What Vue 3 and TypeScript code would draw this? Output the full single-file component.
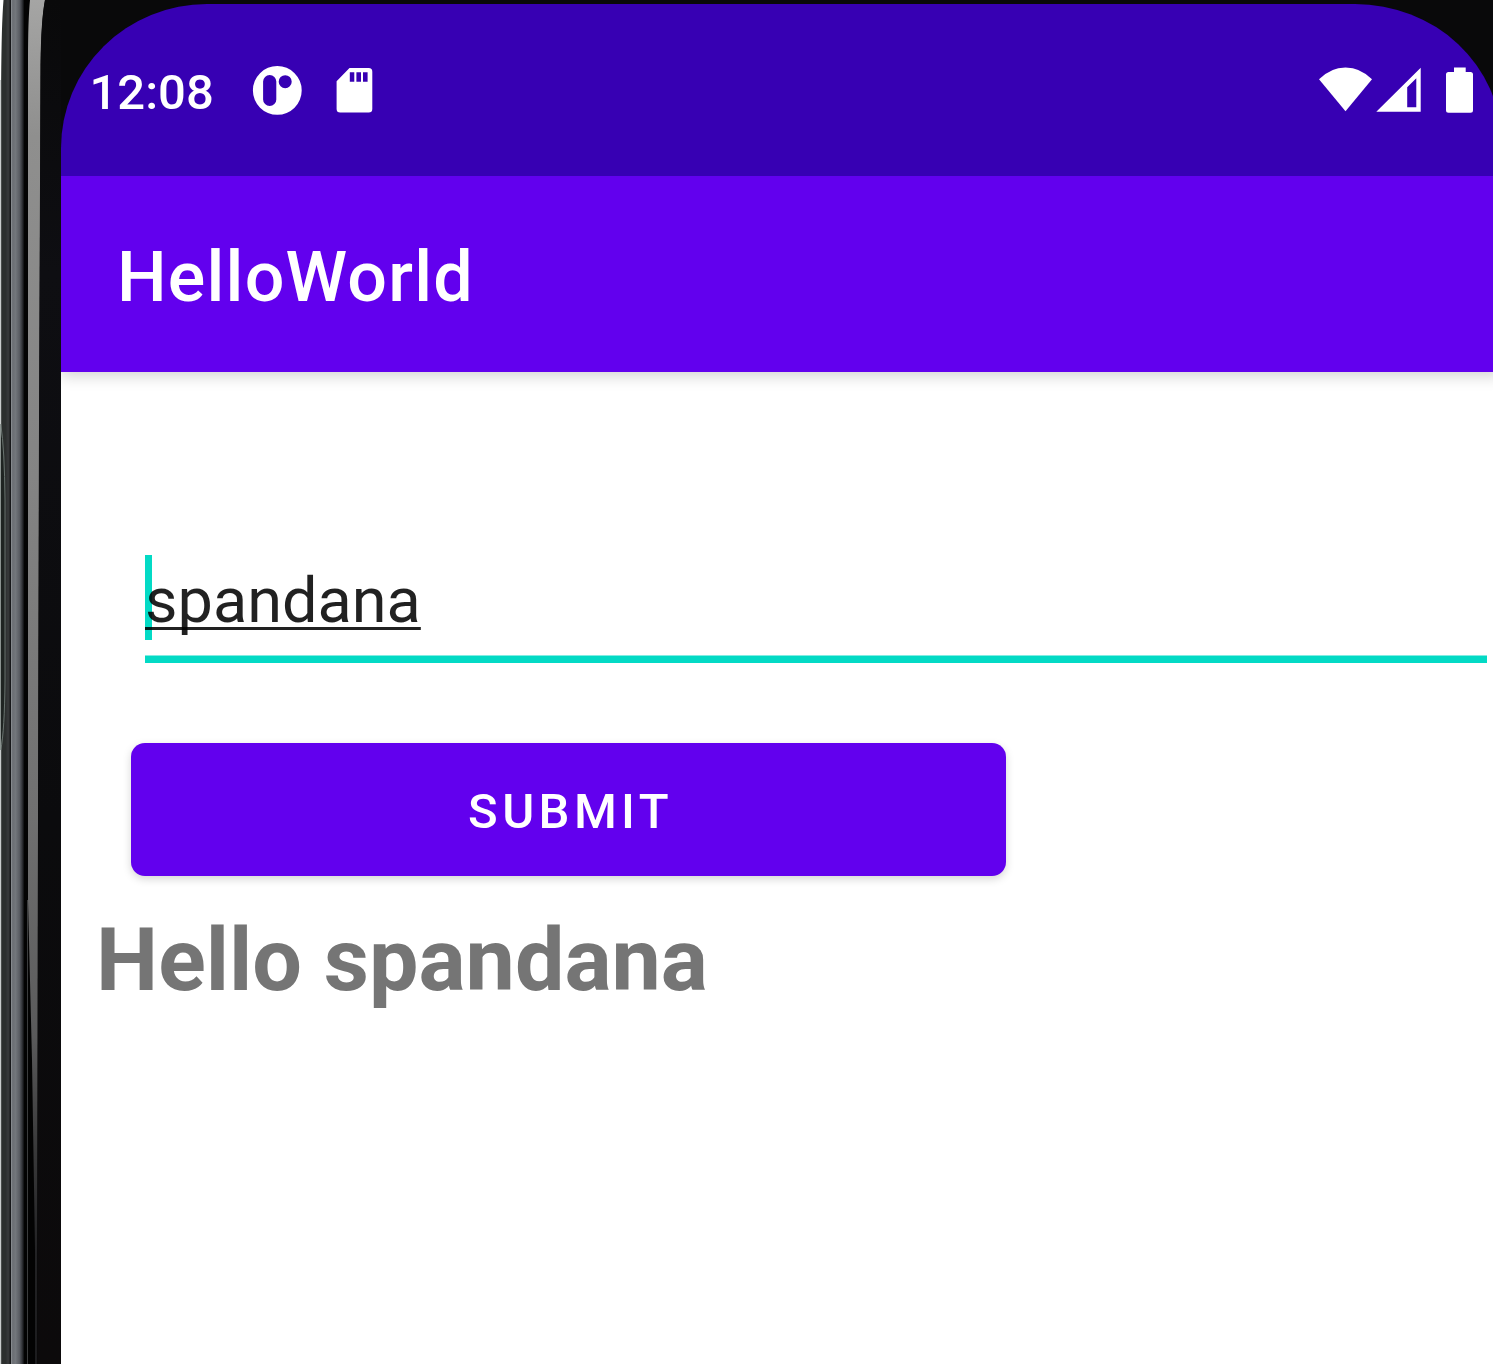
<script setup lang="ts">
import { ref } from 'vue'

const clock = ref('12:08')
const appTitle = ref('HelloWorld')
const name = ref('spandana')
</script>

<template>
  <div class="device">
    <svg class="bezel" width="61" height="1364" viewBox="0 0 61 1364">
      <defs>
        <linearGradient id="rail" x1="0" x2="1" y1="0" y2="0">
          <stop offset="0" stop-color="#66696e" />
          <stop offset="0.35" stop-color="#73777c" />
          <stop offset="0.65" stop-color="#5a5d63" />
          <stop offset="0.85" stop-color="#33353a" />
          <stop offset="1" stop-color="#0c0d0e" />
        </linearGradient>
        <linearGradient id="strip" x1="0" x2="0" y1="0" y2="1">
          <stop offset="0" stop-color="#a5a5a4" />
          <stop offset="0.1" stop-color="#8f8f8e" />
          <stop offset="0.35" stop-color="#848484" />
          <stop offset="0.6" stop-color="#707070" />
          <stop offset="0.76" stop-color="#5a5a5b" />
          <stop offset="0.84" stop-color="#3a3a3b" />
          <stop offset="0.92" stop-color="#222224" />
          <stop offset="1" stop-color="#1c1c1e" />
        </linearGradient>
        <linearGradient id="glass" x1="0" x2="0" y1="0" y2="1">
          <stop offset="0" stop-color="#09090a" />
          <stop offset="0.2" stop-color="#0e0e12" />
          <stop offset="0.6" stop-color="#0b0b0d" />
          <stop offset="1" stop-color="#0c0a0b" />
        </linearGradient>
      </defs>
      <rect width="61" height="1364" fill="#030303" />
      <rect x="1" width="9" height="1364" fill="#2c2f2e" />
      <rect x="6.500" width="3" height="1364" fill="#353738" />
      <rect x="9.700" width="1.500" height="1364" fill="#17181a" />
      <rect x="11" width="13" height="1364" fill="url(#rail)" />
      <rect x="11" width="1.200" height="1364" fill="#85898d" />
      <rect x="39" width="22" height="1364" fill="url(#glass)" />
      <path d="M30 0H45Q41 20 40.500 65L39 420L37.800 900L37.200 1250V1364H35V1250L32 1060L28 900V60Q28 20 30 0Z" fill="url(#strip)" />
      <path d="M45 0H61V1364H37.500L38 900L39.200 420L40.700 65Q41.200 20 45 0Z" fill="url(#glass)" />
      <path d="M27.500 900V1364" stroke="#4a4b4d" stroke-width="0.800" />
      <rect width="1.200" height="1364" fill="#c9cccc" />
      <path d="M0 0H3.500Q1.500 25 1 80H0Z" fill="#fff" />
      <path d="M0 424Q4.500 450 5 500V680Q4.500 730 0 750Z" fill="#1f2422" />
      <path d="M0.800 424Q4.600 450 5 500V680Q4.600 730 0.800 750" fill="none" stroke="#6f7a76" stroke-width="0.900" />
      <path d="M0.500 424V750" stroke="#8b9390" stroke-width="1" />
    </svg>

    <div class="panel">
      <main class="screen">
        <header class="status">
          <span class="clock">{{ clock }}</span>
          <svg class="app-icon" width="50" height="50" viewBox="252 65 50 50">
            <path
              fill="#fff"
              fill-rule="evenodd"
              d="M277.300 66a24.400 24.400 0 1 0 0 48.800a24.400 24.400 0 1 0 0-48.800ZM269.700 75a6.600 6.600 0 0 1 6.600 6.600V99.400a6.600 6.600 0 0 1-13.200 0V81.600a6.600 6.600 0 0 1 6.600-6.600ZM285.200 75.200a6.500 6.500 0 1 1 0 13a6.500 6.500 0 1 1 0-13Z"
            />
          </svg>
          <svg class="sd-icon" width="38" height="46" viewBox="335 67 38 46">
            <path
              fill="#fff"
              fill-rule="evenodd"
              d="M349.500 68.100H368.700Q372.300 68.100 372.300 71.700V109Q372.300 112.600 368.700 112.600H340.200Q336.600 112.600 336.600 109V81.200ZM349.800 72.300V81.800H354.300V72.300ZM356.400 72.300V81.800H361V72.300ZM363 72.300V81.800H367.600V72.300Z"
            />
          </svg>
          <svg class="signals" width="156" height="48" viewBox="1318 66 156 48">
            <g fill="#fff">
              <path d="M1345.500 111.300L1319 79.300Q1330.500 67.400 1345.500 67.400T1372 79.300Z" />
              <path fill-rule="evenodd" d="M1376.300 111.700L1420.700 67.700V111.700ZM1407.200 87.300V107.200H1416.300V78.300Z" />
              <path d="M1454 67.400H1465.700V72H1470.500Q1473 72 1473 74.500V110.200Q1473 112.700 1470.500 112.700H1448.500Q1446 112.700 1446 110.200V74.500Q1446 72 1448.500 72H1454Z" />
            </g>
          </svg>
        </header>
        <div class="appbar">
          <h1>{{ appTitle }}</h1>
        </div>
        <section class="content">
          <div class="field">
            <span class="caret"></span>
            <span class="value">{{ name }}</span>
          </div>
          <button class="submit" type="button">SUBMIT</button>
          <p class="greeting">Hello {{ name }}</p>
        </section>
      </main>
    </div>
  </div>
</template>

<style>
body {
  margin: 0;
  overflow: hidden;
}
</style>

<style scoped>
.device {
  display: flex;
  width: 1493px;
  height: 1364px;
  overflow: hidden;
  background: #09090a;
  font-family: Roboto, 'Liberation Sans', sans-serif;
}
.bezel {
  display: block;
  flex: none;
}
.panel {
  flex: none;
  width: 1440px;
  padding-top: 4px;
  box-sizing: border-box;
  height: 1364px;
  background: #09090a;
}
.screen {
  display: flex;
  flex-direction: column;
  height: 1360px;
}
.status {
  flex: none;
  display: flex;
  align-items: flex-start;
  box-sizing: border-box;
  height: 172px;
  padding: 61px 27px 0 28.500px;
  border-radius: 146px 146px 0 0 / 144px 137px 0 0;
  background: #3700b3;
}
.clock {
  width: 162.500px;
  color: #fff;
  font-size: 49px;
  font-weight: 500;
  line-height: 55px;
}
.app-icon {
  flex: none;
}
.sd-icon {
  flex: none;
  margin: 2px 0 0 33px;
}
.signals {
  flex: none;
  margin: 1px 0 0 auto;
}
.appbar {
  flex: none;
  display: flex;
  align-items: center;
  position: relative;
  height: 196px;
  padding-left: 56px;
  box-sizing: border-box;
  background: #6200ee;
  box-shadow: 0 4px 14px rgba(0, 0, 0, 0.18);
  clip-path: inset(0 0 -30px 0);
}
h1 {
  margin: 6px 0 0;
  color: #fff;
  font-size: 70px;
  font-weight: 500;
  line-height: 82px;
  letter-spacing: 1.200px;
}
.content {
  flex: 1;
  display: flex;
  flex-direction: column;
  align-items: flex-start;
  background: #fff;
}
.field {
  display: flex;
  position: relative;
  box-sizing: border-box;
  width: 1342px;
  height: 108px;
  margin: 183px 0 0 84px;
  border-bottom: 7px solid #03dac5;
  box-shadow: inset 0 -1px 0 rgba(3, 218, 197, 0.5);
}
.caret {
  position: absolute;
  left: 0;
  top: 0;
  width: 7px;
  height: 85px;
  background: #03dac5;
}
.value {
  position: relative;
  color: rgba(0, 0, 0, 0.87);
  font-size: 63px;
  line-height: 92px;
  text-decoration: underline;
  text-decoration-thickness: 3px;
  text-underline-offset: 4.500px;
  text-decoration-skip-ink: none;
}
.submit {
  width: 875px;
  height: 133px;
  margin: 80px 0 0 70px;
  padding: 3px 0 0 4px;
  border: 0;
  border-radius: 14px;
  background: #6200ee;
  box-shadow: 0 3px 9px rgba(0, 0, 0, 0.17);
  color: #fff;
  font-family: inherit;
  font-size: 49px;
  font-weight: 500;
  letter-spacing: 4.375px;
}
.greeting {
  margin: 32px 0 0 35px;
  color: #757575;
  font-size: 88px;
  font-weight: 700;
  line-height: 103px;
}
</style>
